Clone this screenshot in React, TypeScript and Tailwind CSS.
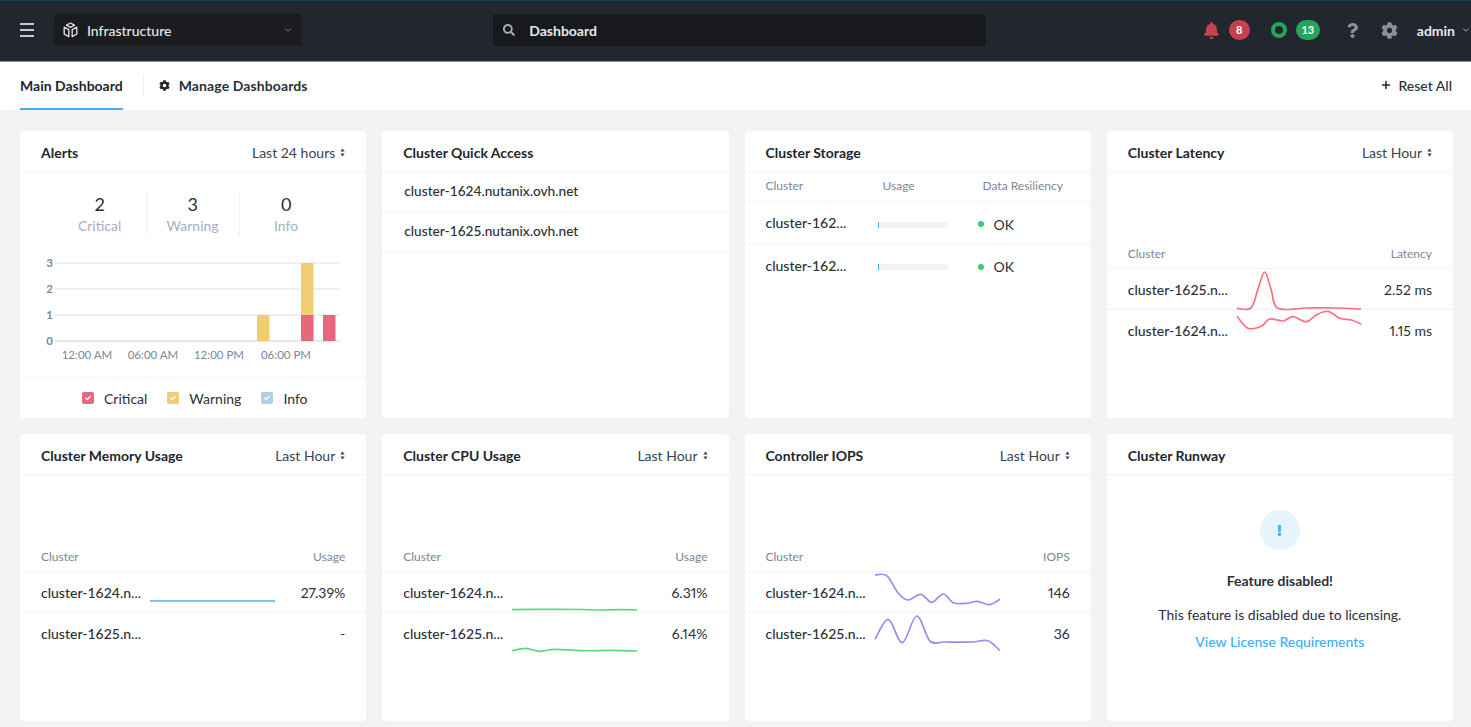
import { ReactNode } from 'react';
import { ChevronDown, Plus } from 'lucide-react';
import { FaBell, FaCheck, FaCog, FaExclamation, FaQuestion, FaSearch } from 'react-icons/fa';

type Pt = [number, number];

// catmull-rom through the points, good enough for the little trend lines
function smoothPath(pts: Pt[]) {
  let d = `M${pts[0][0]} ${pts[0][1]}`;
  for (let i = 0; i < pts.length - 1; i++) {
    const p0 = pts[i - 1] || pts[i];
    const p1 = pts[i];
    const p2 = pts[i + 1];
    const p3 = pts[i + 2] || p2;
    const c1x = p1[0] + (p2[0] - p0[0]) / 6;
    const c1y = p1[1] + (p2[1] - p0[1]) / 6;
    const c2x = p2[0] - (p3[0] - p1[0]) / 6;
    const c2y = p2[1] - (p3[1] - p1[1]) / 6;
    d += ` C${c1x} ${c1y} ${c2x} ${c2y} ${p2[0]} ${p2[1]}`;
  }
  return d;
}

function Spark({ pts, color }: { pts: Pt[]; color: string }) {
  return (
    <svg width="126" height="41" viewBox="0 0 126 41" className="shrink-0 overflow-visible">
      <path d={smoothPath(pts)} fill="none" stroke={color} strokeWidth="1.7" />
    </svg>
  );
}

function UpDown() {
  return (
    <svg width="5" height="9" viewBox="0 0 5 9" className="ml-[5px]">
      <path d="M2.5 0.5L4.7 3.4H0.3zM2.5 8.5L0.3 5.6H4.7z" fill="#3a4450" />
    </svg>
  );
}

function CubeIcon() {
  return (
    <svg width="15" height="16" viewBox="0 0 15 16" fill="none" stroke="#d8dbe0" strokeWidth="1.4" strokeLinejoin="round">
      <path d="M7.5 1L11.5 3.2L7.5 5.4L3.5 3.2Z" />
      <path d="M1.2 5.2L5.8 7.7V14.6L1.2 12.1Z" />
      <path d="M13.8 5.2L9.2 7.7V14.6L13.8 12.1Z" />
    </svg>
  );
}

function Hamburger() {
  return (
    <div className="flex w-[14px] flex-col gap-[4px]">
      <div className="h-[2px] bg-[#c5cad1]" />
      <div className="h-[2px] bg-[#c5cad1]" />
      <div className="h-[2px] bg-[#c5cad1]" />
    </div>
  );
}

function Card({ title, range, children }: { title: string; range?: string; children: ReactNode }) {
  return (
    <div className="flex h-[287px] flex-col rounded-[4px] bg-white">
      <div className="flex h-[41px] shrink-0 items-center justify-between border-b border-[#f2f3f5] px-[21px] pt-[2px]">
        <span className="text-[14px] font-bold text-[#22272e]">{title}</span>
        {range && (
          <span className="flex items-center text-[14px] text-[#3a4450]">
            {range}
            <UpDown />
          </span>
        )}
      </div>
      {children}
    </div>
  );
}

type TrendRow = { name: string; pts?: Pt[]; value: string };

function TrendTable({ unit, color, rows }: { unit: string; color: string; rows: TrendRow[] }) {
  return (
    <div className="pt-[66px]">
      <div className="flex h-[31px] items-center justify-between border-b border-[#f2f3f5] px-[21px] pt-[2px] text-[12px] text-[#7a8899]">
        <span>Cluster</span>
        <span>{unit}</span>
      </div>
      {rows.map((r, i) => (
        <div
          key={r.name}
          className={`flex h-[41px] items-center px-[21px] ${i === 0 ? 'border-b border-[#f2f3f5]' : ''}`}
        >
          <span className="w-[109px] shrink-0 whitespace-nowrap text-[14px] font-medium text-[#2b3138]">{r.name}</span>
          {r.pts ? <Spark pts={r.pts} color={color} /> : <div className="w-[126px] shrink-0" />}
          <span className="ml-auto text-[14px] text-[#2b3138] proportional-nums">{r.value}</span>
        </div>
      ))}
    </div>
  );
}

function AlertsChart() {
  const grid = [
    { label: '3', y: 30 },
    { label: '2', y: 56 },
    { label: '1', y: 82 },
    { label: '0', y: 108 },
  ];
  const times = [
    { label: '12:00 AM', x: 67 },
    { label: '06:00 AM', x: 133 },
    { label: '12:00 PM', x: 199 },
    { label: '06:00 PM', x: 266 },
  ];
  return (
    <svg width="346" height="134" viewBox="0 0 346 134" className="block">
      {grid.map((g) => (
        <g key={g.label}>
          <line x1="35" x2="320" y1={g.y} y2={g.y} stroke={g.label === '0' ? '#dde2e9' : '#e8ebef'} strokeWidth="1.5" />
          <text x="33" y={g.y + 4} textAnchor="end" fontSize="11.5" fontWeight="700" fill="#7a8899">
            {g.label}
          </text>
        </g>
      ))}
      <rect x="237" y="82" width="12.5" height="26" fill="#f0cd73" />
      <rect x="281" y="30" width="12.5" height="52" fill="#f0cd73" />
      <rect x="281" y="82" width="12.5" height="26" fill="#e7677d" />
      <rect x="303" y="82" width="12.5" height="26" fill="#e7677d" />
      {times.map((t) => (
        <text key={t.label} x={t.x} y="126" textAnchor="middle" fontSize="11.5" fill="#7a8899">
          {t.label}
        </text>
      ))}
    </svg>
  );
}

function Stat({ n, label, divider }: { n: string; label: string; divider?: boolean }) {
  return (
    <div className={`flex w-[93px] flex-col items-center ${divider ? 'border-r border-[#f0f1f3]' : ''}`}>
      <span className="text-[18px] leading-[24px] text-[#2b3138]">{n}</span>
      <span className="text-[14px] leading-[20px] text-[#a6b0bd]">{label}</span>
    </div>
  );
}

function Legend({ color, label, mr }: { color: string; label: string; mr: string }) {
  return (
    <span className={`flex items-center ${mr}`}>
      <span className={`mr-[10px] flex h-[12px] w-[12px] items-center justify-center rounded-[2px] ${color}`}>
        <FaCheck className="text-white" size={6} />
      </span>
      <span className="text-[14px] text-[#2b3138]">{label}</span>
    </span>
  );
}

function StorageRow({ border }: { border?: boolean }) {
  return (
    <div className={`flex h-[42px] items-center pl-[21px] ${border ? 'border-b border-[#f2f3f5]' : ''}`}>
      <span className="w-[112px] shrink-0 whitespace-nowrap text-[14px] font-medium text-[#2b3138]">cluster-162...</span>
      <div className="mt-[4px] h-[6px] w-[70px] shrink-0 rounded-[3px] bg-[#f2f3f5]">
        <div className="h-full w-px bg-[#3ab0ff]" />
      </div>
      <span className="ml-[30px] mt-[3px] h-[6px] w-[6px] rounded-full bg-[#36d068]" />
      <span className="ml-[10px] mt-[3px] text-[14px] text-[#2b3138]">OK</span>
    </div>
  );
}

const latency1: Pt[] = [[0, 39.3], [14, 39], [21, 20], [27.7, 3], [34, 20], [41, 39.3], [70, 39], [100, 39], [124, 40]];
const latency2: Pt[] = [[0, 6.3], [11, 18.3], [24.3, 16.3], [32.7, 9], [46, 11], [56, 6.7], [69.3, 11.7], [79.3, 5], [91, 1.3], [102.7, 8.3], [114.3, 10], [124.3, 14]];
const iops1: Pt[] = [[0, 3], [11.7, 3.7], [23.3, 21.3], [33, 28], [45.7, 22.3], [56.7, 30.3], [68.3, 22], [78.3, 30.7], [91.7, 31.3], [102.3, 29.3], [114.3, 32.7], [125, 27.3]];
const iops2: Pt[] = [[0, 26.3], [13.3, 6.3], [27.3, 29.7], [41.7, 3], [55, 28], [70, 29], [96.7, 29], [113, 27.7], [125, 37.7]];
const cpu1: Pt[] = [[0, 37.7], [40, 37.3], [70, 37.5], [85, 38], [110, 37.6], [125, 38]];
const cpu2: Pt[] = [[0, 37.7], [14, 35.3], [27, 38.3], [43, 36.3], [70, 37.7], [100, 37.4], [125, 38]];
const memory: Pt[] = [[0, 29], [60, 29], [125, 29]];

export default function App() {
  return (
    <div
      className="flex h-[727px] w-[1471px] flex-col overflow-hidden bg-[#f2f3f5]"
      style={{ fontFamily: 'Lato, "Open Sans", sans-serif' }}
    >
      {/* Top bar */}
      <header className="flex h-[62px] shrink-0 items-center overflow-hidden border-t border-b border-t-[#1b3a55] border-b-[#8b9199] bg-[#22262f] pb-[2px] pl-[20px]">
        <Hamburger />
        <div className="ml-[20px] flex h-[32px] w-[250px] items-center rounded-[4px] bg-[#1a1c20] pl-[9px] pr-[9px]">
          <CubeIcon />
          <span className="ml-[9px] text-[14px] font-medium text-[#e6e8eb]">Infrastructure</span>
          <ChevronDown size={10} className="ml-auto text-[#8b9199]" />
        </div>
        <div className="ml-[191px] flex h-[32px] w-[496px] items-center rounded-[4px] bg-[#17191d] pl-[10px]">
          <FaSearch size={12} className="text-[#a6adb6]" />
          <span className="ml-[14px] text-[14px] font-bold text-[#e6e8eb]">Dashboard</span>
        </div>
        <div className="ml-[217px] flex items-center">
          <FaBell size={17} className="text-[#c8404f]" />
          <span className="ml-[9px] flex h-[20px] w-[21px] items-center justify-center rounded-full bg-[#c8404f] text-[11px] font-bold text-white">
            8
          </span>
          <span className="ml-[21px] h-[16px] w-[16px] rounded-full border-[4px] border-[#27a35a]" />
          <span className="ml-[9px] flex h-[20px] w-[24px] items-center justify-center rounded-full bg-[#27a35a] text-[11px] font-bold text-white">
            13
          </span>
          <FaQuestion size={15} className="ml-[25px] text-[#8b9199]" />
          <FaCog size={17} className="ml-[21px] text-[#8b9199]" />
          <span className="ml-[19px] text-[14px] font-bold text-[#e6e8eb]">admin</span>
          <ChevronDown size={10} className="ml-[6px] shrink-0 text-[#c5cad1]" />
        </div>
      </header>

      {/* Tabs */}
      <nav className="flex h-[48px] shrink-0 items-center bg-white pl-[20px] pr-[19px] pb-[2px]">
        <div className="-mb-[2px] flex h-[48px] items-center border-b-2 border-[#3ab0ff]">
          <span className="text-[14px] font-bold text-[#22272e]">Main Dashboard</span>
        </div>
        <div className="ml-[20px] h-[20px] w-px bg-[#eceef1]" />
        <FaCog size={11} className="ml-[15px] text-[#22272e]" />
        <span className="ml-[9px] text-[14px] font-bold tracking-[0.1px] text-[#2b3138]">Manage Dashboards</span>
        <Plus size={12} strokeWidth={3} className="ml-auto text-[#22272e]" />
        <span className="ml-[6px] text-[14px] font-medium text-[#2b3138]">Reset All</span>
      </nav>

      {/* Widgets */}
      <main className="grid grid-cols-4 gap-x-[16px] gap-y-[16px] pl-[20px] pr-[18px] pt-[21px]">
        <Card title="Alerts" range="Last 24 hours">
          <div className="flex justify-center pt-[20px]">
            <Stat n="2" label="Critical" divider />
            <Stat n="3" label="Warning" divider />
            <Stat n="0" label="Info" />
          </div>
          <div className="-mt-[3px]">
            <AlertsChart />
          </div>
          <div className="mt-auto flex h-[41px] items-center border-t border-[#f2f3f5] pl-[62px]">
            <Legend color="bg-[#e7677d]" label="Critical" mr="mr-[20px]" />
            <Legend color="bg-[#f0cd73]" label="Warning" mr="mr-[20px]" />
            <Legend color="bg-[#b5cde4]" label="Info" mr="" />
          </div>
        </Card>

        <Card title="Cluster Quick Access">
          {['cluster-1624.nutanix.ovh.net', 'cluster-1625.nutanix.ovh.net'].map((c) => (
            <div key={c} className="flex h-[40px] items-center border-b border-[#f2f3f5] pl-[22px] text-[13.7px] font-medium text-[#2b3138]">
              {c}
            </div>
          ))}
        </Card>

        <Card title="Cluster Storage">
          <div className="flex h-[30px] items-center border-b border-[#f2f3f5] pb-[2px] pl-[21px] text-[12px] text-[#7a8899]">
            <span className="w-[117px]">Cluster</span>
            <span className="w-[100px]">Usage</span>
            <span>Data Resiliency</span>
          </div>
          <StorageRow border />
          <StorageRow />
        </Card>

        <Card title="Cluster Latency" range="Last Hour">
          <TrendTable
            unit="Latency"
            color="#f9707f"
            rows={[
              { name: 'cluster-1625.n...', pts: latency1, value: '2.52 ms' },
              { name: 'cluster-1624.n...', pts: latency2, value: '1.15 ms' },
            ]}
          />
        </Card>

        <Card title="Cluster Memory Usage" range="Last Hour">
          <TrendTable
            unit="Usage"
            color="#4fb3f6"
            rows={[
              { name: 'cluster-1624.n...', pts: memory, value: '27.39%' },
              { name: 'cluster-1625.n...', value: '-' },
            ]}
          />
        </Card>

        <Card title="Cluster CPU Usage" range="Last Hour">
          <TrendTable
            unit="Usage"
            color="#58d97f"
            rows={[
              { name: 'cluster-1624.n...', pts: cpu1, value: '6.31%' },
              { name: 'cluster-1625.n...', pts: cpu2, value: '6.14%' },
            ]}
          />
        </Card>

        <Card title="Controller IOPS" range="Last Hour">
          <TrendTable
            unit="IOPS"
            color="#9a8cf0"
            rows={[
              { name: 'cluster-1624.n...', pts: iops1, value: '146' },
              { name: 'cluster-1625.n...', pts: iops2, value: '36' },
            ]}
          />
        </Card>

        <Card title="Cluster Runway">
          <div className="flex flex-col items-center pt-[35px]">
            <div className="flex h-[40px] w-[40px] items-center justify-center rounded-full bg-[#e6f4fe]">
              <FaExclamation size={11} className="text-[#3ab0ff]" />
            </div>
            <span className="mt-[20px] text-[14px] font-bold text-[#2b3138]">Feature disabled!</span>
            <span className="mt-[13px] text-[14px] text-[#2b3138]">This feature is disabled due to licensing.</span>
            <span className="mt-[6px] text-[14px] font-medium text-[#3ab0ff]">View License Requirements</span>
          </div>
        </Card>
      </main>
    </div>
  );
}
